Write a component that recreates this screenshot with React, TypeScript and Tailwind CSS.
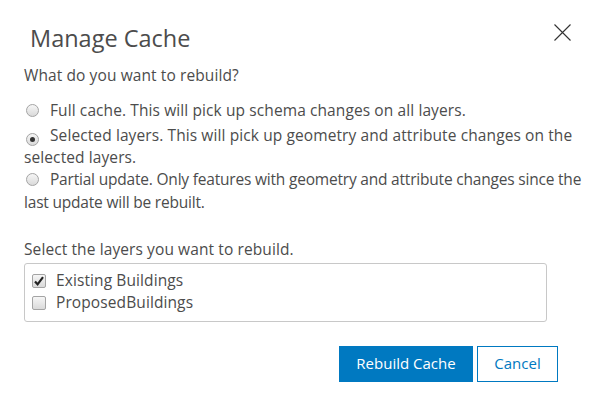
import React, { useState } from "react";

type Option = {
  id: string;
  label: string;
  tight?: boolean;
};

const options: Option[] = [
  { id: "full", label: "Full cache. This will pick up schema changes on all layers." },
  {
    id: "selected",
    label: "Selected layers. This will pick up geometry and attribute changes on the selected layers.",
  },
  {
    id: "partial",
    label: "Partial update. Only features with geometry and attribute changes since the last update will be rebuilt.",
    tight: true,
  },
];

const layers = [
  { id: "existing", label: "Existing Buildings", checked: true },
  { id: "proposed", label: "ProposedBuildings", checked: false },
];

const Radio = ({ checked }: { checked: boolean }) => (
  <span className="relative inline-flex items-center justify-center w-[13px] h-[13px] rounded-full border border-[#a4a4a4] bg-gradient-to-b from-[#f6f6f6] to-[#dadada] shrink-0">
    {checked && <span className="w-[5px] h-[5px] rounded-full bg-[#333]" />}
  </span>
);

const Checkbox = ({ checked }: { checked: boolean }) => (
  <span className="relative inline-flex items-center justify-center w-[14px] h-[14px] rounded-[2px] border border-[#a4a4a4] bg-gradient-to-b from-[#f6f6f6] to-[#dadada] shrink-0">
    {checked && (
      <svg width="12" height="12" viewBox="0 0 12 12">
        <path d="M2 6.5 L4.6 9.3 L10 2.2" fill="none" stroke="#222" strokeWidth="2.2" />
      </svg>
    )}
  </span>
);

export default function App() {
  const [mode, setMode] = useState("selected");

  return (
    <div
      className="w-[596px] h-[403px] bg-white text-[#4c4c4c] relative"
      style={{ fontFamily: "'Open Sans', 'Liberation Sans', sans-serif" }}
    >
      <button className="absolute left-[554px] top-[24px] w-[17px] h-[17px]" aria-label="Close">
        <svg width="17" height="17" viewBox="0 0 17 17">
          <path d="M0.5 0.5 L16.5 16.5 M16.5 0.5 L0.5 16.5" stroke="#333" strokeWidth="1.1" />
        </svg>
      </button>

      <div className="pl-[24px] pr-[14px] pt-[22px]">
        <h1 className="pl-[6px] text-[23.5px] leading-[32px] text-[#4c4c4c] font-normal">Manage Cache</h1>

        <p className="mt-[10px] text-[15.5px] leading-[22px] tracking-[0.1px]">What do you want to rebuild?</p>

        <div className="mt-[14px] flex flex-col">
          {options.map((opt, i) => (
            <label
              key={opt.id}
              className={
                "text-[15.5px] leading-[21.7px] cursor-pointer " +
                (opt.tight ? "tracking-[-0.2px] " : "tracking-[0.1px] ") +
                (i === 0 ? "mb-[2px]" : "")
              }
              onClick={() => setMode(opt.id)}
            >
              <span className="inline-block align-[-1px] ml-[2px] mr-[11px]">
                <Radio checked={mode === opt.id} />
              </span>
              {opt.label}
            </label>
          ))}
        </div>

        <p className="mt-[24px] text-[15.5px] leading-[22px] tracking-[0.1px]">
          Select the layers you want to rebuild.
        </p>

        <div className="mt-[3px] w-[523px] h-[59px] border border-[#c8c8c8] rounded-[3px] pl-[7px] pt-[6px]">
          {layers.map((layer) => (
            <div key={layer.id} className="flex items-center h-[22px] text-[15.5px] tracking-[0.1px]">
              <Checkbox checked={layer.checked} />
              <span className="ml-[10px]">{layer.label}</span>
            </div>
          ))}
        </div>

        <div className="mt-[24px] flex justify-end gap-[4px] pr-[24px]">
          <button className="w-[134px] h-[36px] bg-[#0079c1] text-white text-[15px]">Rebuild Cache</button>
          <button className="w-[81px] h-[36px] border border-[#0079c1] text-[#0079c1] text-[15px] bg-white">
            Cancel
          </button>
        </div>
      </div>
    </div>
  );
}
